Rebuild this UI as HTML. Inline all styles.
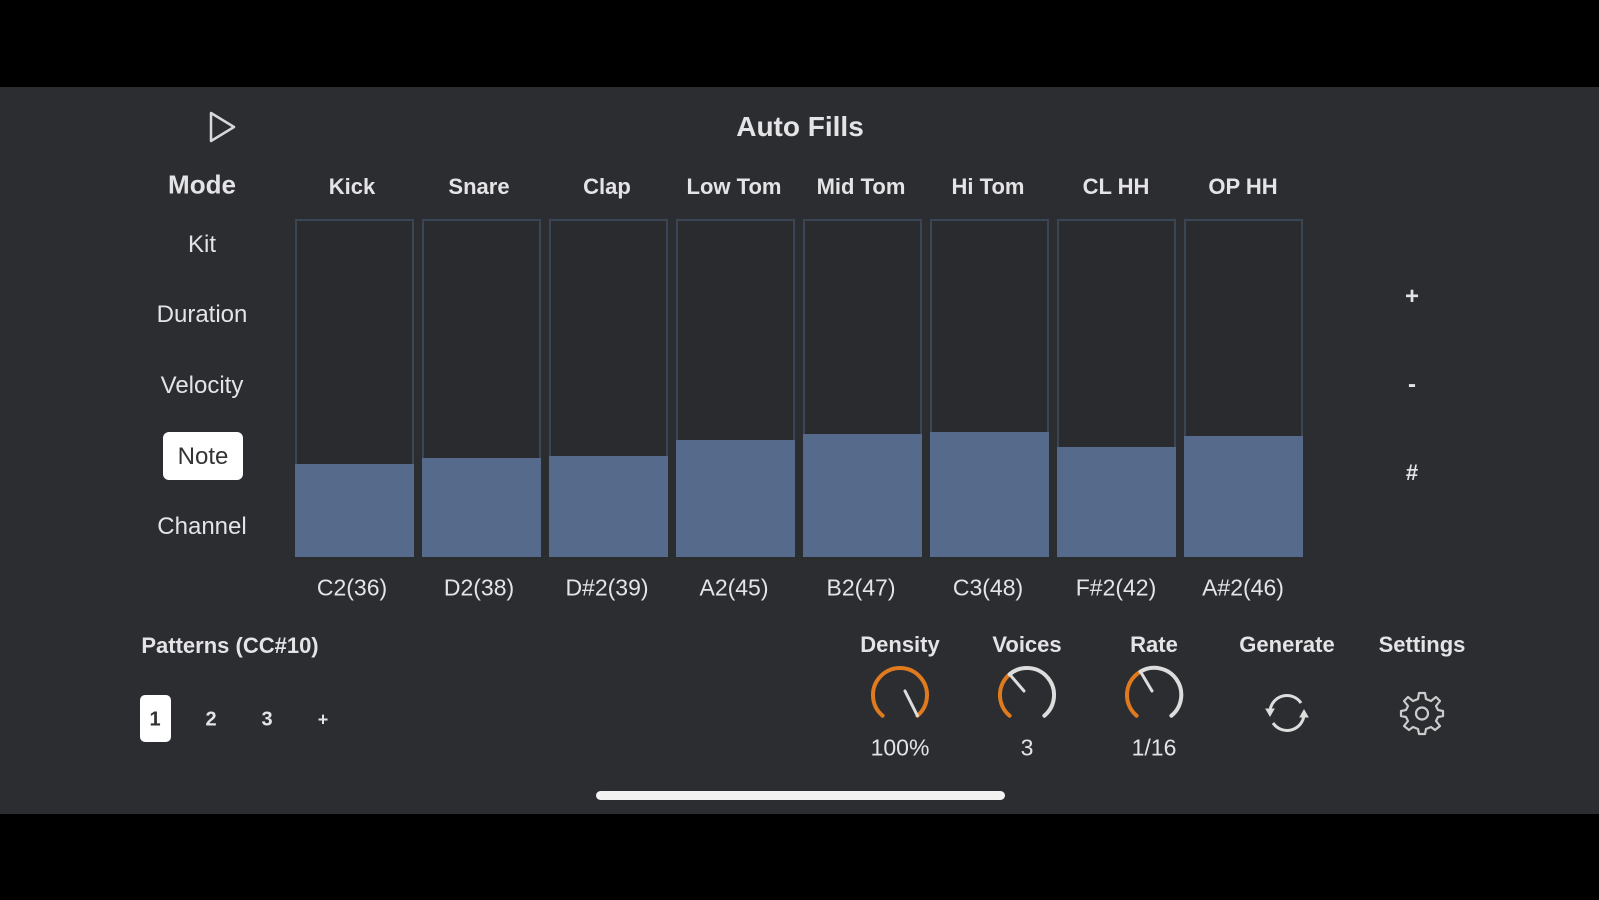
<!DOCTYPE html>
<html><head><meta charset="utf-8"><style>
*{margin:0;padding:0;box-sizing:border-box}
body{width:1599px;height:900px;background:#000;position:relative;overflow:hidden;font-family:"Liberation Sans",sans-serif;color:#e4e4e6}
#app{position:absolute;left:0;top:87px;width:1599px;height:727px;background:#2c2d31}
.t{position:absolute;transform:translate(-50%,-50%);white-space:nowrap;font-size:24px}
.b{font-weight:bold}
.h{font-size:22px;font-weight:bold}
.n{font-size:23px}
.bar{position:absolute;top:219px;width:119px;height:338px;border:2px solid #3a4656;background:#2a2b2f}
.fill{position:absolute;left:-2px;right:-2px;bottom:-2px;background:#566a8b}
</style></head><body>
<div id="app"></div>
<svg style="position:absolute;left:208px;top:110px" width="30" height="34"><path d="M3 3 L26 17 L3 31 Z" fill="none" stroke="#d8d8da" stroke-width="2.5" stroke-linejoin="round"/></svg>
<div class="t b" style="left:800px;top:127px;font-size:28px">Auto Fills</div>
<div class="t b" style="left:202px;top:185px;font-size:26px">Mode</div>
<div class="t" style="left:202px;top:245px">Kit</div>
<div class="t" style="left:202px;top:315px">Duration</div>
<div class="t" style="left:202px;top:386px">Velocity</div>
<div style="position:absolute;left:163px;top:432px;width:80px;height:48px;background:#fff;border-radius:6px"></div>
<div class="t" style="left:203px;top:457px;color:#333">Note</div>
<div class="t" style="left:202px;top:527px">Channel</div>

<div class="t h" style="left:352px;top:187px">Kick</div>
<div class="t h" style="left:479px;top:187px">Snare</div>
<div class="t h" style="left:607px;top:187px">Clap</div>
<div class="t h" style="left:734px;top:187px">Low Tom</div>
<div class="t h" style="left:861px;top:187px">Mid Tom</div>
<div class="t h" style="left:988px;top:187px">Hi Tom</div>
<div class="t h" style="left:1116px;top:187px">CL HH</div>
<div class="t h" style="left:1243px;top:187px">OP HH</div>

<div class="bar" style="left:295px"><div class="fill" style="top:243px"></div></div>
<div class="bar" style="left:422px"><div class="fill" style="top:237px"></div></div>
<div class="bar" style="left:549px"><div class="fill" style="top:235px"></div></div>
<div class="bar" style="left:676px"><div class="fill" style="top:219px"></div></div>
<div class="bar" style="left:803px"><div class="fill" style="top:213px"></div></div>
<div class="bar" style="left:930px"><div class="fill" style="top:211px"></div></div>
<div class="bar" style="left:1057px"><div class="fill" style="top:226px"></div></div>
<div class="bar" style="left:1184px"><div class="fill" style="top:215px"></div></div>

<div class="t n" style="left:352px;top:588px">C2(36)</div>
<div class="t n" style="left:479px;top:588px">D2(38)</div>
<div class="t n" style="left:607px;top:588px">D#2(39)</div>
<div class="t n" style="left:734px;top:588px">A2(45)</div>
<div class="t n" style="left:861px;top:588px">B2(47)</div>
<div class="t n" style="left:988px;top:588px">C3(48)</div>
<div class="t n" style="left:1116px;top:588px">F#2(42)</div>
<div class="t n" style="left:1243px;top:588px">A#2(46)</div>

<div class="t b" style="left:1412px;top:297px;font-size:24px">+</div>
<div class="t b" style="left:1412px;top:385px;font-size:24px">-</div>
<div class="t b" style="left:1412px;top:473px;font-size:22px">#</div>

<div class="t b" style="left:230px;top:646px;font-size:22px">Patterns (CC#10)</div>
<div style="position:absolute;left:140px;top:695px;width:31px;height:47px;background:#fff;border-radius:5px"></div>
<div class="t b" style="left:155px;top:720px;color:#333;font-size:20px">1</div>
<div class="t b" style="left:211px;top:720px;font-size:20px">2</div>
<div class="t b" style="left:267px;top:720px;font-size:20px">3</div>
<div class="t b" style="left:323px;top:720px;font-size:18px">+</div>

<div class="t h" style="left:900px;top:645px">Density</div>
<div class="t h" style="left:1027px;top:645px">Voices</div>
<div class="t h" style="left:1154px;top:645px">Rate</div>
<div class="t h" style="left:1287px;top:645px">Generate</div>
<div class="t h" style="left:1422px;top:645px">Settings</div>

<svg style="position:absolute;left:860px;top:655px" width="80" height="80" viewBox="-40 -40 80 80" fill="none" stroke-width="4" stroke-linecap="round">
<path d="M-17.4 20.7 A27 27 0 1 1 17.4 20.7" stroke="#e07a1e"/>
<line x1="5" y1="-4" x2="17.4" y2="20.7" stroke="#ddd" stroke-width="3"/>
</svg>
<svg style="position:absolute;left:987px;top:655px" width="80" height="80" viewBox="-40 -40 80 80" fill="none" stroke-width="4" stroke-linecap="round">
<path d="M-17.4 20.7 A27 27 0 0 1 -17.4 -20.7" stroke="#e07a1e"/>
<path d="M-17.4 -20.7 A27 27 0 0 1 17.4 20.7" stroke="#ddd"/>
<line x1="-17.4" y1="-20.7" x2="-3" y2="-4" stroke="#ddd" stroke-width="3"/>
</svg>
<svg style="position:absolute;left:1114px;top:655px" width="80" height="80" viewBox="-40 -40 80 80" fill="none" stroke-width="4" stroke-linecap="round">
<path d="M-17.4 20.7 A27 27 0 0 1 -13.5 -23.4" stroke="#e07a1e"/>
<path d="M-13.5 -23.4 A27 27 0 0 1 17.4 20.7" stroke="#ddd"/>
<line x1="-13.5" y1="-23.4" x2="-2" y2="-4" stroke="#ddd" stroke-width="3"/>
</svg>

<div class="t n" style="left:900px;top:748px">100%</div>
<div class="t n" style="left:1027px;top:748px">3</div>
<div class="t n" style="left:1154px;top:748px">1/16</div>

<svg style="position:absolute;left:1262px;top:688px" width="50" height="50" viewBox="-25 -25 50 50" fill="none" stroke="#ddd" stroke-width="3">
<path d="M-17 -2 A17 17 0 0 1 14 -10"/>
<path d="M17 2 A17 17 0 0 1 -14 10"/>
<path d="M-21 -4 L-17 3 L-13 -4 Z" fill="#ddd" stroke-width="1"/>
<path d="M21 4 L17 -3 L13 4 Z" fill="#ddd" stroke-width="1"/>
</svg>
<svg style="position:absolute;left:1397px;top:688px" width="50" height="50" viewBox="-25 -25 50 50" fill="none" stroke="#ccc" stroke-width="2.2" stroke-linejoin="round">
<path d="M-3 -20 L3 -20 L4 -14 L9 -12 L14 -16 L18 -12 L14 -7 L16 -3 L21 -2 L21 3 L16 4 L14 8 L18 13 L13 17 L9 14 L4 16 L3 21 L-3 21 L-4 16 L-9 14 L-13 17 L-18 13 L-14 8 L-16 4 L-21 3 L-21 -2 L-16 -3 L-14 -7 L-18 -12 L-14 -16 L-9 -12 L-4 -14 Z"/>
<circle cx="0" cy="0.5" r="6"/>
</svg>

<div style="position:absolute;left:596px;top:791px;width:409px;height:9px;background:#f2f2f2;border-radius:5px"></div>
</body></html>
